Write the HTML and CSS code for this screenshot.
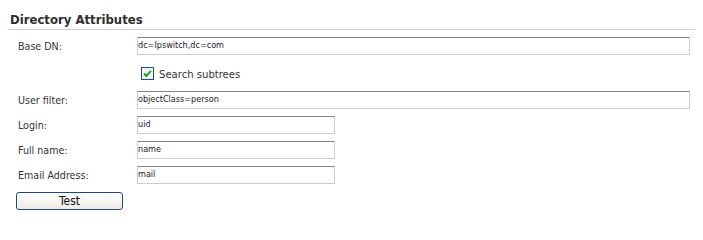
FILE: index.html
```html
<!DOCTYPE html>
<html>
<head>
<meta charset="utf-8">
<link rel="stylesheet" href="styles.css">
</head>
<body>
<div class="panel">
  <h2 class="title">Directory Attributes</h2>
  <div class="form">
    <label class="lbl">Base DN:</label>
    <input class="field wide" type="text" value="dc=Ipswitch,dc=com">

    <span class="spacer"></span>
    <label class="check">
      <span class="box"><svg viewBox="0 0 11 11" width="11" height="11"><path d="M2 5.5 L4.3 8 L9 2.8" fill="none" stroke="#1fa12a" stroke-width="2"/></svg></span>
      <span class="check-text">Search subtrees</span>
    </label>

    <label class="lbl">User filter:</label>
    <input class="field wide" type="text" value="objectClass=person">

    <label class="lbl">Login:</label>
    <input class="field short" type="text" value="uid">

    <label class="lbl">Full name:</label>
    <input class="field short" type="text" value="name">

    <label class="lbl">Email Address:</label>
    <input class="field short" type="text" value="mail">
  </div>
  <button class="btn" type="button">Test</button>
</div>
</body>
</html>
```

FILE: styles.css
```css
html, body {
  margin: 0;
  padding: 0;
  background: #ffffff;
}
body {
  font-family: "DejaVu Sans Condensed", "DejaVu Sans", sans-serif;
  font-stretch: condensed;
  color: #333333;
}
.panel {
  width: 687px;
  margin-left: 8px;
  padding-top: 12px;
}
.title {
  margin: 0;
  padding: 0 0 2px 2px;
  font-size: 13px;
  font-weight: bold;
  line-height: 15px;
  color: #2e2e2e;
  border-bottom: 1px solid #cfcfcf;
}
.form {
  display: grid;
  grid-template-columns: 119px auto;
  grid-template-rows: 18px 22px 18px 18px 18px 18px;
  row-gap: 7px;
  padding-left: 10px;
  margin-top: 7px;
  align-items: center;
}
.lbl {
  font-size: 10.6px;
  line-height: 13px;
  padding-top: 1px;
  color: #333333;
}
.field {
  box-sizing: border-box;
  height: 18px;
  margin: 0;
  padding: 0 2px 2px 0;
  border: 1px solid #cccccc;
  border-top-color: #858585;
  font-family: "DejaVu Sans Condensed", "DejaVu Sans", sans-serif;
  font-stretch: condensed;
  font-size: 9px;
  color: #1a1a2a;
  background: #ffffff;
  outline: none;
}
.wide { width: 553px; }
.short { width: 198px; }
.check {
  display: flex;
  align-items: center;
  gap: 5px;
  padding-left: 4px;
  margin-top: 0;
}
.box {
  box-sizing: border-box;
  width: 13px;
  height: 13px;
  border: 1px solid #1f4f7e;
  background: #f4f4f4;
  display: flex;
  align-items: center;
  justify-content: center;
}
.box svg { display: block; }
.check-text {
  font-size: 11.2px;
  padding-top: 2px;
  color: #333333;
}
.btn {
  box-sizing: border-box;
  display: block;
  width: 107px;
  height: 18px;
  margin: 8px 0 0 8px;
  padding: 0;
  border: 1px solid #1d4a7a;
  border-radius: 3px;
  background: linear-gradient(#ffffff, #ecebe5);
  font-family: "DejaVu Sans Condensed", "DejaVu Sans", sans-serif;
  font-stretch: condensed;
  font-size: 12px;
  color: #111111;
  line-height: 14px;
}
```
